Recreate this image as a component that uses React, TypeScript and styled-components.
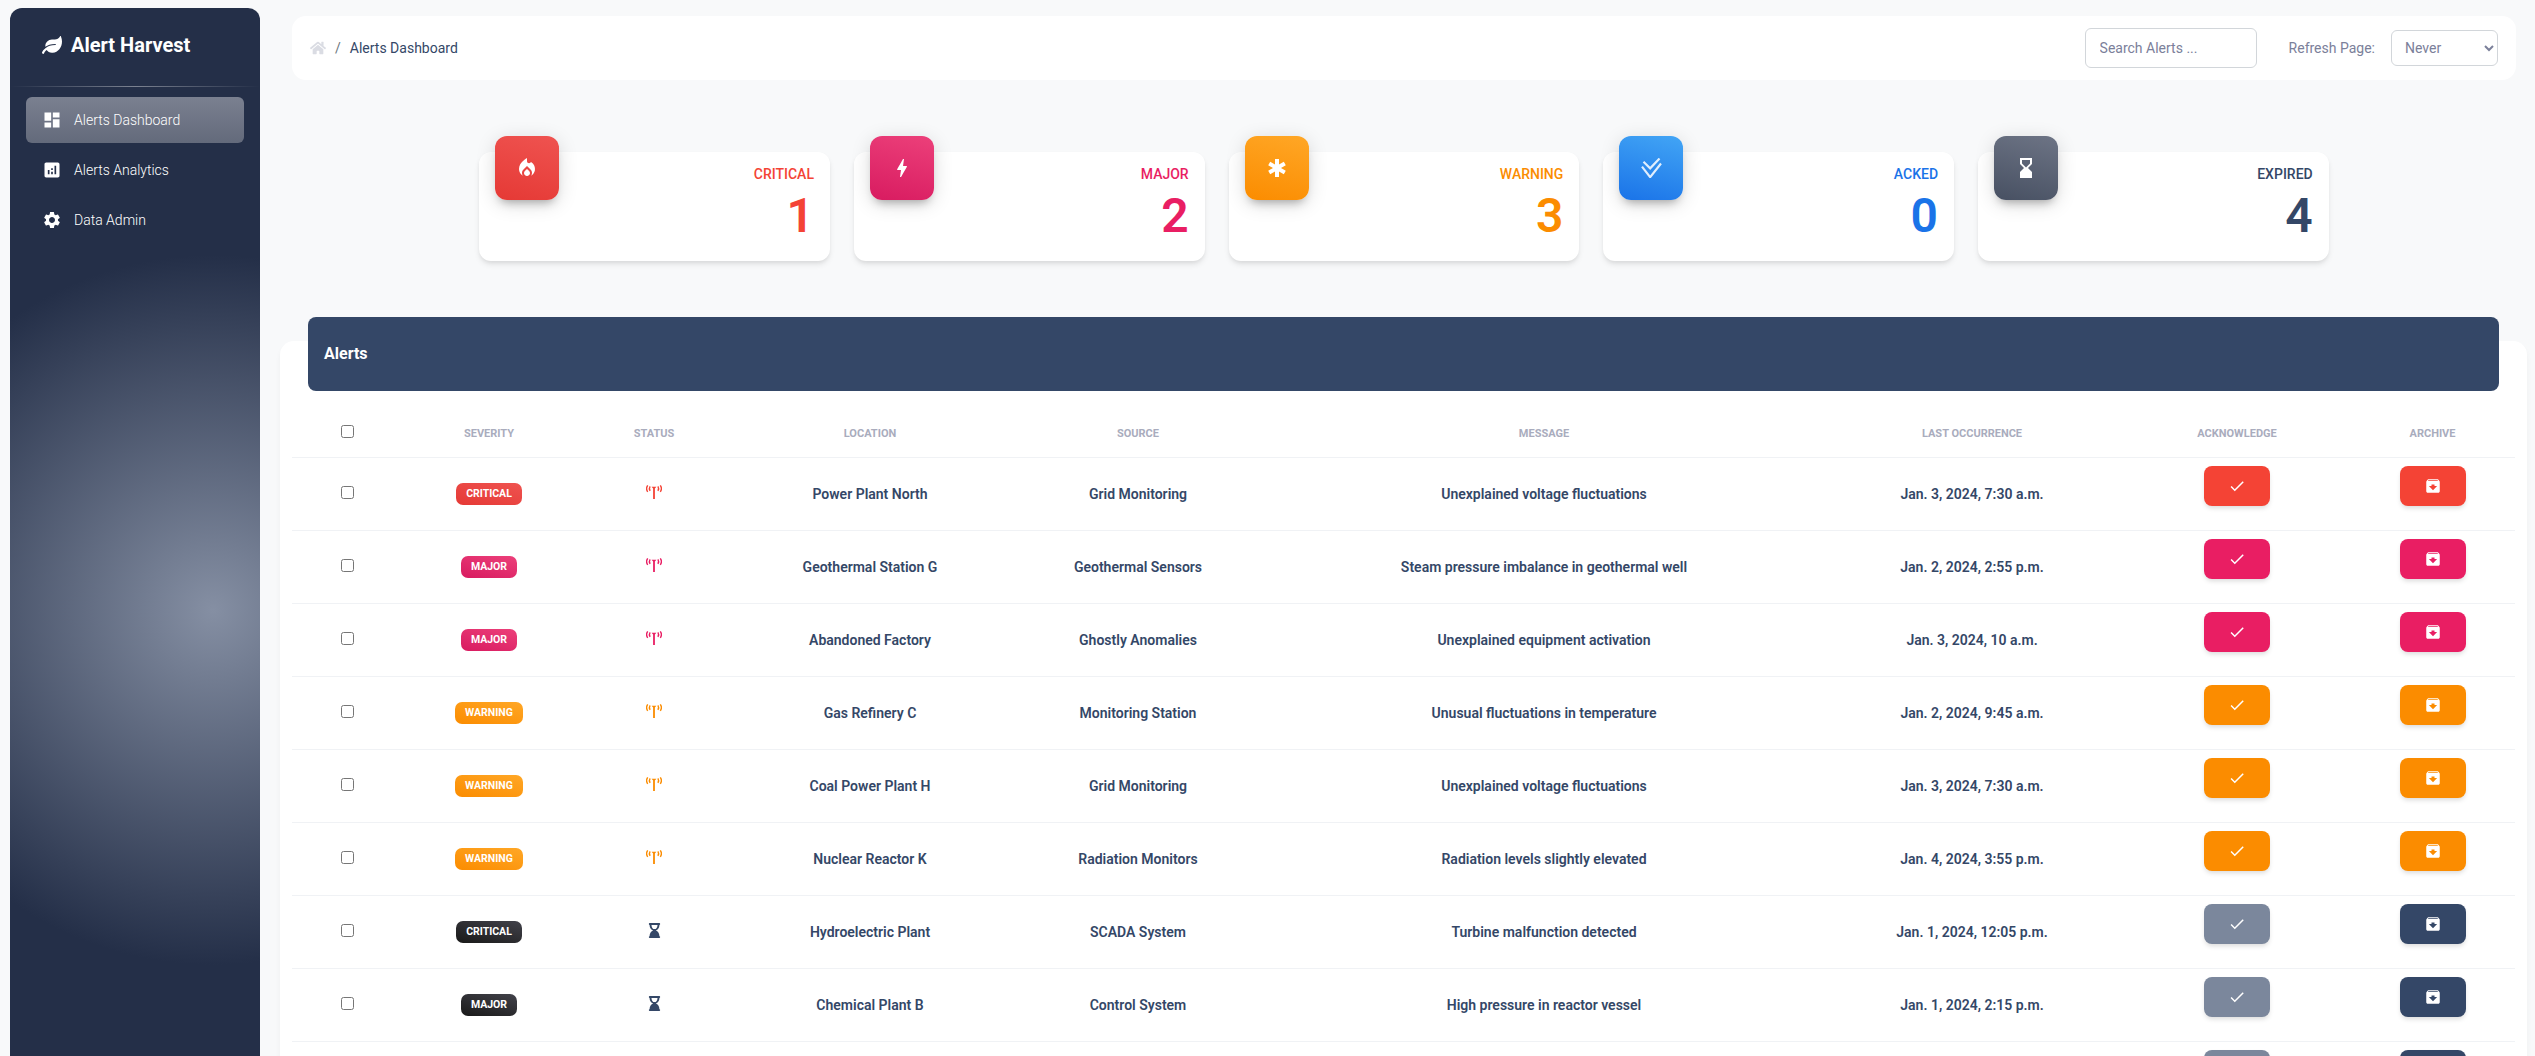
import React from 'react';
import styled, { createGlobalStyle } from 'styled-components';
import { FaHome, FaHourglassEnd, FaLeaf } from 'react-icons/fa';
import {
  MdAnalytics,
  MdArchive,
  MdBolt,
  MdCheck,
  MdDashboard,
  MdEmergency,
  MdHourglassBottom,
  MdLocalFireDepartment,
  MdSettings,
} from 'react-icons/md';

type Level = 'critical' | 'major' | 'warning' | 'acked' | 'expired';

const palette: Record<Level, { text: string; from: string; to: string }> = {
  critical: { text: '#f44335', from: '#ef5350', to: '#e53935' },
  major: { text: '#e91e63', from: '#ec407a', to: '#d81b60' },
  warning: { text: '#fb8c00', from: '#ffa726', to: '#fb8c00' },
  acked: { text: '#1a73e8', from: '#42a5f5', to: '#1a73e8' },
  expired: { text: '#344767', from: '#6d7485', to: '#475062' },
};

const GlobalStyle = createGlobalStyle`
  html, body {
    margin: 0;
    height: 100%;
    overflow: hidden;
    background: #f8f9fa;
    font-family: Roboto, "Liberation Sans", sans-serif;
  }
  * { box-sizing: border-box; }
`;

const Page = styled.div`
  display: flex;
  align-items: flex-start;
  height: 100vh;
  overflow: hidden;
`;

const Sidebar = styled.aside`
  flex: 0 0 250px;
  height: 1100px;
  margin: 8px 0 0 10px;
  border-radius: 12px;
  color: #fff;
  background: radial-gradient(circle 355px at 203px 602px, #858fa3 0%, #242f48 100%);
`;

const Brand = styled.div`
  display: flex;
  align-items: center;
  gap: 9px;
  height: 78px;
  padding: 0 0 4px 32px;
  font-size: 20px;
  font-weight: 700;
  svg { font-size: 20px; }
`;

const Divider = styled.hr`
  height: 1px;
  margin: 0 0 10px;
  border: 0;
  background: linear-gradient(90deg, rgba(255, 255, 255, 0), rgba(255, 255, 255, 0.4), rgba(255, 255, 255, 0));
`;

const NavList = styled.nav`
  display: flex;
  flex-direction: column;
  gap: 4px;
  padding: 0 16px;
`;

const NavItem = styled.a<{ $active?: boolean }>`
  display: flex;
  align-items: center;
  gap: 12px;
  height: 46px;
  padding: 0 16px;
  border-radius: 6px;
  font-size: 14px;
  font-weight: 300;
  background: ${(p) => (p.$active ? 'linear-gradient(180deg, #7a8090, #636a7b)' : 'transparent')};
  svg { font-size: 20px; flex: none; }
`;

const Main = styled.main`
  flex: 1;
  min-width: 0;
  padding: 16px 19px 0 32px;
`;

const TopBar = styled.header`
  display: flex;
  align-items: center;
  justify-content: space-between;
  height: 64px;
  padding: 0 18px;
  border-radius: 14px;
  background: #fff;
`;

const Crumbs = styled.div`
  display: flex;
  align-items: center;
  gap: 9px;
  font-size: 14px;
  color: #344767;
  svg { color: #dadce3; font-size: 16px; }
`;

const Slash = styled.span`
  color: #6c757d;
`;

const Controls = styled.div`
  display: flex;
  align-items: center;
`;

const SearchInput = styled.input`
  width: 172px;
  height: 40px;
  margin-right: 32px;
  padding: 0 14px;
  border: 1px solid #d2d6da;
  border-radius: 6px;
  font: 400 14px Roboto, sans-serif;
  &::placeholder { color: #7b809a; opacity: 1; }
`;

const RefreshLabel = styled.label`
  margin-right: 16px;
  font-size: 14px;
  color: #7b809a;
`;

const RefreshSelect = styled.select`
  width: 107px;
  height: 36px;
  padding: 0 0 0 9px;
  border: 1px solid #d2d6da;
  border-radius: 6px;
  background: #fff;
  font: 400 14px Roboto, sans-serif;
  color: #7b809a;
`;

const Stats = styled.section`
  display: grid;
  grid-template-columns: repeat(5, 350.7px);
  gap: 24px;
  justify-content: center;
  padding: 72px 0 80px;
`;

const StatCard = styled.article`
  position: relative;
  height: 109px;
  padding: 10px 16px 0;
  border-radius: 12px;
  background: #fff;
  text-align: right;
  box-shadow: 0 4px 6px -1px rgba(0, 0, 0, 0.1), 0 2px 4px -1px rgba(0, 0, 0, 0.06);
`;

const StatIcon = styled.div<{ $level: Level }>`
  position: absolute;
  left: 16px;
  top: -16px;
  display: flex;
  align-items: center;
  justify-content: center;
  width: 64px;
  height: 64px;
  border-radius: 12px;
  color: #fff;
  font-size: 24px;
  background: linear-gradient(195deg, ${(p) => palette[p.$level].from}, ${(p) => palette[p.$level].to});
  box-shadow: 0 4px 20px rgba(0, 0, 0, 0.14), 0 7px 10px -5px rgba(0, 0, 0, 0.3);
`;

const StatLabel = styled.div<{ $level: Level }>`
  font-size: 14px;
  font-weight: 500;
  line-height: 24px;
  color: ${(p) => palette[p.$level].text};
`;

const StatValue = styled.div<{ $level: Level }>`
  margin-top: 5px;
  font-size: 48px;
  font-weight: 600;
  line-height: 50px;
  color: ${(p) => palette[p.$level].text};
`;

const AlertsCard = styled.section`
  margin: 0 -11px 0 -12px;
  padding: 0 12px;
  border-radius: 14px 14px 0 0;
  background: #fff;
  box-shadow: 0 4px 6px -1px rgba(0, 0, 0, 0.06);
`;

const AlertsHeader = styled.div`
  position: relative;
  top: -24px;
  display: flex;
  align-items: center;
  height: 74px;
  margin: 0 16px -24px;
  padding: 0 16px 2px;
  border-radius: 8px;
  background: #344767;
  color: #fff;
  font-size: 16px;
  font-weight: 700;
`;

const Table = styled.table`
  width: 100%;
  margin-top: 23px;
  border-collapse: collapse;
  table-layout: fixed;
`;

const Col = styled.col<{ $width: number }>`
  width: ${(p) => p.$width}px;
`;

const HeadCell = styled.th`
  height: 43px;
  padding: 0 0 3px;
  border-bottom: 1px solid #f0f2f5;
  font-size: 11px;
  font-weight: 700;
  color: #a9acbd;
  text-transform: uppercase;
  text-align: center;
`;

const Row = styled.tr`
  height: 73px;
`;

const Cell = styled.td`
  padding: 0;
  border-bottom: 1px solid #f0f2f5;
  font-size: 14px;
  font-weight: 600;
  color: #344767;
  text-align: center;
`;

const CheckBox = styled.input`
  display: block;
  width: 13px;
  height: 13px;
  margin: 0 auto 3px;
`;

const HeadCheckBox = styled(CheckBox)`
  margin-bottom: 4px;
`;

const Badge = styled.span<{ $level: Level; $dim: boolean }>`
  display: inline-block;
  padding: 0 10px;
  height: 22px;
  border-radius: 7px;
  color: #fff;
  font-size: 10.5px;
  font-weight: 700;
  line-height: 21px;
  background: ${(p) =>
    p.$dim
      ? 'linear-gradient(195deg, #42424a, #191919)'
      : `linear-gradient(195deg, ${palette[p.$level].from}, ${palette[p.$level].to})`};
`;

const StatusIcon = styled.span<{ $color: string }>`
  display: flex;
  justify-content: center;
  margin-bottom: 3px;
  color: ${(p) => p.$color};
  font-size: 15px;
`;

const ActionButton = styled.button<{ $bg: string }>`
  display: flex;
  align-items: center;
  justify-content: center;
  width: 66px;
  height: 40px;
  margin: 0 auto 15px;
  border: 0;
  border-radius: 8px;
  color: #fff;
  font-size: 18px;
  background: ${(p) => p.$bg};
  box-shadow: 0 3px 5px -1px rgba(0, 0, 0, 0.15);
`;

// two stacked ticks on the acked card, the package icons sit too flat
const StackedChecks = () => (
  <svg width="21" height="20" viewBox="0 0 24 24" fill="none" stroke="rgba(255,255,255,0.85)" strokeWidth="2.6">
    <polyline points="2.4,4.6 10.4,12.4 21.6,0.6" />
    <polyline points="0.6,10.4 10.4,23 23.4,6.6" />
  </svg>
);

const AntennaIcon = () => (
  <svg width="16" height="14" viewBox="0 0 16 14" fill="currentColor" stroke="none">
    <path d="M5.6 1.8 H10.4 L8.9 3.4 V14 H7.1 V3.4 Z" />
    <g fill="none" stroke="currentColor" strokeWidth="1.4">
      <path d="M1.7 0.4 C0.3 2.4 0.3 4.8 1.7 6.8" />
      <path d="M4.1 1.4 C3.2 2.8 3.2 4.4 4.1 5.8" />
      <path d="M14.3 0.4 C15.7 2.4 15.7 4.8 14.3 6.8" />
      <path d="M11.9 1.4 C12.8 2.8 12.8 4.4 11.9 5.8" />
    </g>
  </svg>
);

const stats: { level: Level; label: string; value: number; icon: React.ReactNode }[] = [
  { level: 'critical', label: 'CRITICAL', value: 1, icon: <MdLocalFireDepartment /> },
  { level: 'major', label: 'MAJOR', value: 2, icon: <MdBolt /> },
  { level: 'warning', label: 'WARNING', value: 3, icon: <MdEmergency /> },
  { level: 'acked', label: 'ACKED', value: 0, icon: <StackedChecks /> },
  { level: 'expired', label: 'EXPIRED', value: 4, icon: <MdHourglassBottom /> },
];

const columns = [
  { name: 'Severity', width: 174 },
  { name: 'Status', width: 156 },
  { name: 'Location', width: 276 },
  { name: 'Source', width: 260 },
  { name: 'Message', width: 552 },
  { name: 'Last Occurrence', width: 304 },
  { name: 'Acknowledge', width: 226 },
  { name: 'Archive', width: 165 },
];

const alerts: { level: Level; expired: boolean; location: string; source: string; message: string; time: string }[] = [
  { level: 'critical', expired: false, location: 'Power Plant North', source: 'Grid Monitoring', message: 'Unexplained voltage fluctuations', time: 'Jan. 3, 2024, 7:30 a.m.' },
  { level: 'major', expired: false, location: 'Geothermal Station G', source: 'Geothermal Sensors', message: 'Steam pressure imbalance in geothermal well', time: 'Jan. 2, 2024, 2:55 p.m.' },
  { level: 'major', expired: false, location: 'Abandoned Factory', source: 'Ghostly Anomalies', message: 'Unexplained equipment activation', time: 'Jan. 3, 2024, 10 a.m.' },
  { level: 'warning', expired: false, location: 'Gas Refinery C', source: 'Monitoring Station', message: 'Unusual fluctuations in temperature', time: 'Jan. 2, 2024, 9:45 a.m.' },
  { level: 'warning', expired: false, location: 'Coal Power Plant H', source: 'Grid Monitoring', message: 'Unexplained voltage fluctuations', time: 'Jan. 3, 2024, 7:30 a.m.' },
  { level: 'warning', expired: false, location: 'Nuclear Reactor K', source: 'Radiation Monitors', message: 'Radiation levels slightly elevated', time: 'Jan. 4, 2024, 3:55 p.m.' },
  { level: 'critical', expired: true, location: 'Hydroelectric Plant', source: 'SCADA System', message: 'Turbine malfunction detected', time: 'Jan. 1, 2024, 12:05 p.m.' },
  { level: 'major', expired: true, location: 'Chemical Plant B', source: 'Control System', message: 'High pressure in reactor vessel', time: 'Jan. 1, 2024, 2:15 p.m.' },
  // only the tops of this row's buttons show above the fold
  { level: 'warning', expired: true, location: '', source: '', message: '', time: '' },
];

export default function App() {
  return (
    <Page>
      <GlobalStyle />
      <Sidebar>
        <Brand>
          <FaLeaf />
          Alert Harvest
        </Brand>
        <Divider />
        <NavList>
          <NavItem $active>
            <MdDashboard />
            Alerts Dashboard
          </NavItem>
          <NavItem>
            <MdAnalytics />
            Alerts Analytics
          </NavItem>
          <NavItem>
            <MdSettings />
            Data Admin
          </NavItem>
        </NavList>
      </Sidebar>
      <Main>
        <TopBar>
          <Crumbs>
            <FaHome />
            <Slash>/</Slash>
            Alerts Dashboard
          </Crumbs>
          <Controls>
            <SearchInput placeholder="Search Alerts ..." />
            <RefreshLabel>Refresh Page:</RefreshLabel>
            <RefreshSelect defaultValue="never">
              <option value="never">Never</option>
            </RefreshSelect>
          </Controls>
        </TopBar>
        <Stats>
          {stats.map((s) => (
            <StatCard key={s.label}>
              <StatIcon $level={s.level}>{s.icon}</StatIcon>
              <StatLabel $level={s.level}>{s.label}</StatLabel>
              <StatValue $level={s.level}>{s.value}</StatValue>
            </StatCard>
          ))}
        </Stats>
        <AlertsCard>
          <AlertsHeader>Alerts</AlertsHeader>
          <Table>
            <colgroup>
              <Col $width={110} />
              {columns.map((c) => (
                <Col key={c.name} $width={c.width} />
              ))}
            </colgroup>
            <thead>
              <tr>
                <HeadCell>
                  <HeadCheckBox type="checkbox" />
                </HeadCell>
                {columns.map((c) => (
                  <HeadCell key={c.name}>{c.name}</HeadCell>
                ))}
              </tr>
            </thead>
            <tbody>
              {alerts.map((a, i) => {
                const color = palette[a.level].text;
                return (
                  <Row key={i}>
                    <Cell>
                      <CheckBox type="checkbox" />
                    </Cell>
                    <Cell>
                      {a.location && (
                        <Badge $level={a.level} $dim={a.expired}>
                          {a.level.toUpperCase()}
                        </Badge>
                      )}
                    </Cell>
                    <Cell>
                      <StatusIcon $color={a.expired ? '#344767' : color}>
                        {a.expired ? <FaHourglassEnd /> : <AntennaIcon />}
                      </StatusIcon>
                    </Cell>
                    <Cell>{a.location}</Cell>
                    <Cell>{a.source}</Cell>
                    <Cell>{a.message}</Cell>
                    <Cell>{a.time}</Cell>
                    <Cell>
                      <ActionButton $bg={a.expired ? '#7b879c' : color}>
                        <MdCheck />
                      </ActionButton>
                    </Cell>
                    <Cell>
                      <ActionButton $bg={a.expired ? '#344767' : color}>
                        <MdArchive />
                      </ActionButton>
                    </Cell>
                  </Row>
                );
              })}
            </tbody>
          </Table>
        </AlertsCard>
      </Main>
    </Page>
  );
}
